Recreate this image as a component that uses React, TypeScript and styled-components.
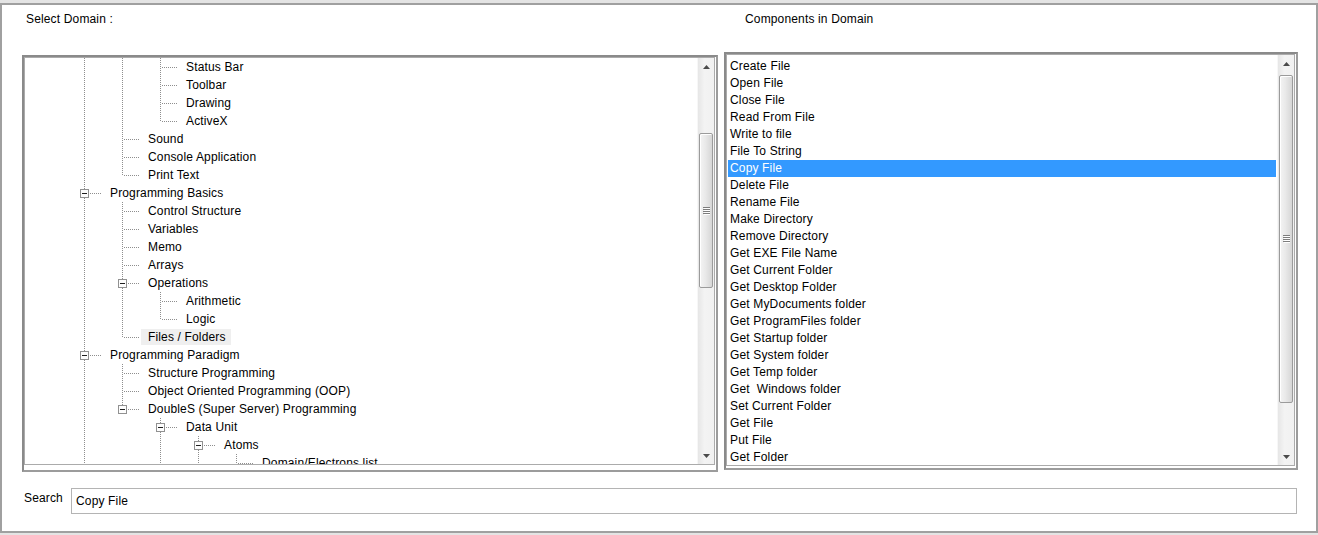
import React from "react";
import styled, { createGlobalStyle } from "styled-components";

const GlobalStyle = createGlobalStyle`
  html, body {
    margin: 0;
    padding: 0;
    background: #e4e4e4;
  }
  body {
    font-family: "Liberation Sans", Arial, sans-serif;
  }
`;

type Conn = "tee" | "elbow";

interface TreeRow {
  label: string;
  guides: boolean[];
  conn: Conn;
  open?: boolean;
  selected?: boolean;
}

const treeRows: TreeRow[] = [
  { label: "Status Bar", guides: [true, true], conn: "tee" },
  { label: "Toolbar", guides: [true, true], conn: "tee" },
  { label: "Drawing", guides: [true, true], conn: "tee" },
  { label: "ActiveX", guides: [true, true], conn: "elbow" },
  { label: "Sound", guides: [true], conn: "tee" },
  { label: "Console Application", guides: [true], conn: "tee" },
  { label: "Print Text", guides: [true], conn: "elbow" },
  { label: "Programming Basics", guides: [], conn: "tee", open: true },
  { label: "Control Structure", guides: [true], conn: "tee" },
  { label: "Variables", guides: [true], conn: "tee" },
  { label: "Memo", guides: [true], conn: "tee" },
  { label: "Arrays", guides: [true], conn: "tee" },
  { label: "Operations", guides: [true], conn: "tee", open: true },
  { label: "Arithmetic", guides: [true, true], conn: "tee" },
  { label: "Logic", guides: [true, true], conn: "elbow" },
  { label: "Files / Folders", guides: [true], conn: "elbow", selected: true },
  { label: "Programming Paradigm", guides: [], conn: "tee", open: true },
  { label: "Structure Programming", guides: [true], conn: "tee" },
  { label: "Object Oriented Programming (OOP)", guides: [true], conn: "tee" },
  { label: "DoubleS (Super Server) Programming", guides: [true], conn: "elbow", open: true },
  { label: "Data Unit", guides: [true, false], conn: "tee", open: true },
  { label: "Atoms", guides: [true, false, true], conn: "tee", open: true },
  { label: "Domain/Electrons list", guides: [true, false, true, true], conn: "tee" },
];

const components = [
  "Create File",
  "Open File",
  "Close File",
  "Read From File",
  "Write to file",
  "File To String",
  "Copy File",
  "Delete File",
  "Rename File",
  "Make Directory",
  "Remove Directory",
  "Get EXE File Name",
  "Get Current Folder",
  "Get Desktop Folder",
  "Get MyDocuments folder",
  "Get ProgramFiles folder",
  "Get Startup folder",
  "Get System folder",
  "Get Temp folder",
  "Get  Windows folder",
  "Set Current Folder",
  "Get File",
  "Put File",
  "Get Folder",
];

const DOT = "#8e8e8e";

const App = () => {
  return (
    <>
      <GlobalStyle />
      <Window>
        <Board>
          <Caption $indent={4}>Select Domain :</Caption>
          <Caption $indent={21}>Components in Domain</Caption>

          <Frame $top={3} $height={417}>
            <Box $height={408}>
              <TreeView>
                {treeRows.map((row) => (
                  <Row key={row.label}>
                    {row.guides.map((on, i) => (
                      <Guide key={i} on={on} />
                    ))}
                    <Connector conn={row.conn} open={row.open} />
                    <NodeLabel $selected={row.selected}>{row.label}</NodeLabel>
                  </Row>
                ))}
              </TreeView>
              <ScrollBar thumbTop={58} thumbHeight={155} />
            </Box>
          </Frame>

          <Frame $top={0} $height={418}>
            <Box $height={412}>
              <ListArea>
                {components.map((name) => (
                  <Item key={name} $selected={name === "Copy File"}>
                    {name}
                  </Item>
                ))}
              </ListArea>
              <ScrollBar thumbTop={3} thumbHeight={328} />
            </Box>
          </Frame>
        </Board>

        <SearchRow>
          <SearchLabel>Search</SearchLabel>
          <SearchInput value="Copy File" readOnly />
        </SearchRow>
      </Window>
    </>
  );
};

const Guide = ({ on }: { on: boolean }) => (
  <Cell width={38} height={18}>
    {on && (
      <line x1={5.5} y1={0} x2={5.5} y2={18} stroke={DOT} strokeDasharray="1 1" />
    )}
  </Cell>
);

const Connector = ({ conn, open }: { conn: Conn; open?: boolean }) => (
  <Cell width={24} height={18}>
    {open ? (
      <>
        <line x1={5.5} y1={0} x2={5.5} y2={5} stroke={DOT} strokeDasharray="1 1" />
        {conn === "tee" && (
          <line x1={5.5} y1={14} x2={5.5} y2={18} stroke={DOT} strokeDasharray="1 1" />
        )}
        <line x1={11} y1={9.5} x2={23} y2={9.5} stroke={DOT} strokeDasharray="1 1" />
        <rect x={1.5} y={5.5} width={8} height={8} fill="#fdfdfd" stroke="#919191" />
        <line x1={3} y1={9.5} x2={8} y2={9.5} stroke="#1e1e1e" />
      </>
    ) : (
      <>
        <line
          x1={5.5}
          y1={0}
          x2={5.5}
          y2={conn === "tee" ? 18 : 10}
          stroke={DOT}
          strokeDasharray="1 1"
        />
        <line x1={7} y1={9.5} x2={23} y2={9.5} stroke={DOT} strokeDasharray="1 1" />
      </>
    )}
  </Cell>
);

const ScrollBar = ({ thumbTop, thumbHeight }: { thumbTop: number; thumbHeight: number }) => (
  <Track>
    <ArrowButton>
      <svg width={7} height={4}>
        <polygon points="3.5,0 7,4 0,4" fill="#4a4a4a" />
      </svg>
    </ArrowButton>
    <ThumbLane>
      <Thumb $top={thumbTop} $height={thumbHeight}>
        <svg width={7} height={8}>
          {[0, 2, 4, 6].map((y) => (
            <React.Fragment key={y}>
              <line x1={0} y1={y + 0.5} x2={7} y2={y + 0.5} stroke="#7d7d7d" />
              <line x1={1} y1={y + 1.5} x2={7} y2={y + 1.5} stroke="#ffffff" />
            </React.Fragment>
          ))}
        </svg>
      </Thumb>
    </ThumbLane>
    <ArrowButton>
      <svg width={7} height={4}>
        <polygon points="0,0 7,0 3.5,4" fill="#4a4a4a" />
      </svg>
    </ArrowButton>
  </Track>
);

export default App;

const Window = styled.div`
  box-sizing: border-box;
  width: 1318px;
  height: 530px;
  margin-top: 3px;
  border: 2px solid #a0a0a0;
  background: #ffffff;
  padding-left: 20px;
  display: flex;
  flex-direction: column;
  font-size: 12px;
  letter-spacing: 0.15px;
  color: #000;
`;

const Board = styled.div`
  display: grid;
  grid-template-columns: 696px 574px;
  grid-template-rows: 47px 420px;
  column-gap: 6px;
  align-items: start;
`;

const Caption = styled.div<{ $indent: number }>`
  padding: 7px 0 0 ${(p) => p.$indent}px;
  line-height: 14px;
`;

const Frame = styled.div<{ $top: number; $height: number }>`
  box-sizing: border-box;
  margin-top: ${(p) => p.$top}px;
  height: ${(p) => p.$height}px;
  border: 2px solid;
  border-color: #8a8a8a #9c9c9c #9c9c9c #8a8a8a;
  display: flex;
  flex-direction: column;
  align-items: flex-start;
`;

const Box = styled.div<{ $height: number }>`
  box-sizing: border-box;
  width: calc(100% - 1px);
  height: ${(p) => p.$height}px;
  border: 1px solid #ababab;
  background: #fff;
  display: flex;
`;

const TreeView = styled.div`
  flex: 1;
  overflow: hidden;
  padding-left: 54px;
`;

const Row = styled.div`
  display: flex;
  align-items: flex-start;
  height: 18px;
`;

const Cell = styled.svg`
  display: block;
  flex-shrink: 0;
  shape-rendering: crispEdges;
`;

const NodeLabel = styled.span<{ $selected?: boolean }>`
  margin-top: 1px;
  height: 16px;
  line-height: 16px;
  padding: 0 5px 0 7px;
  white-space: nowrap;
  background: ${(p) => (p.$selected ? "#efefef" : "transparent")};
`;

const ListArea = styled.div`
  flex: 1;
  overflow: hidden;
  padding: 3px 1px 0 0;
`;

const Item = styled.div<{ $selected?: boolean }>`
  margin-left: 1px;
  height: 17px;
  line-height: 17px;
  padding-left: 2px;
  white-space: pre;
  background: ${(p) => (p.$selected ? "#3399ff" : "transparent")};
  color: ${(p) => (p.$selected ? "#ffffff" : "#000000")};
`;

const Track = styled.div`
  box-sizing: border-box;
  width: 17px;
  flex-shrink: 0;
  display: flex;
  flex-direction: column;
  background: linear-gradient(to right, #e6e6e6, #f3f3f3 40%, #f1f1f1);
  border-left: 1px solid #f7f7f7;
`;

const ArrowButton = styled.div`
  height: 17px;
  flex-shrink: 0;
  display: flex;
  align-items: center;
  justify-content: center;
`;

const ThumbLane = styled.div`
  flex: 1;
  padding: 0 1px;
`;

const Thumb = styled.div<{ $top: number; $height: number }>`
  box-sizing: border-box;
  margin-top: ${(p) => p.$top}px;
  height: ${(p) => p.$height}px;
  border: 1px solid #9b9b9b;
  border-radius: 2px;
  background: linear-gradient(to right, #f4f4f4, #e9e9e9 45%, #d6d6d6);
  box-shadow: inset 1px 1px 0 #ffffff;
  display: flex;
  align-items: center;
  justify-content: center;
`;

const SearchRow = styled.div`
  display: flex;
  align-items: flex-start;
  padding: 16px 0 0 2px;
`;

const SearchLabel = styled.label`
  width: 47px;
  margin-top: 3px;
  line-height: 14px;
`;

const SearchInput = styled.input`
  box-sizing: border-box;
  width: 1226px;
  height: 26px;
  margin: 0;
  border: 1px solid #b4b4b4;
  padding: 0 0 0 4px;
  font-family: "Liberation Sans", Arial, sans-serif;
  font-size: 12px;
  letter-spacing: 0.15px;
  color: #000;
  outline: none;
  background: #fff;
`;
